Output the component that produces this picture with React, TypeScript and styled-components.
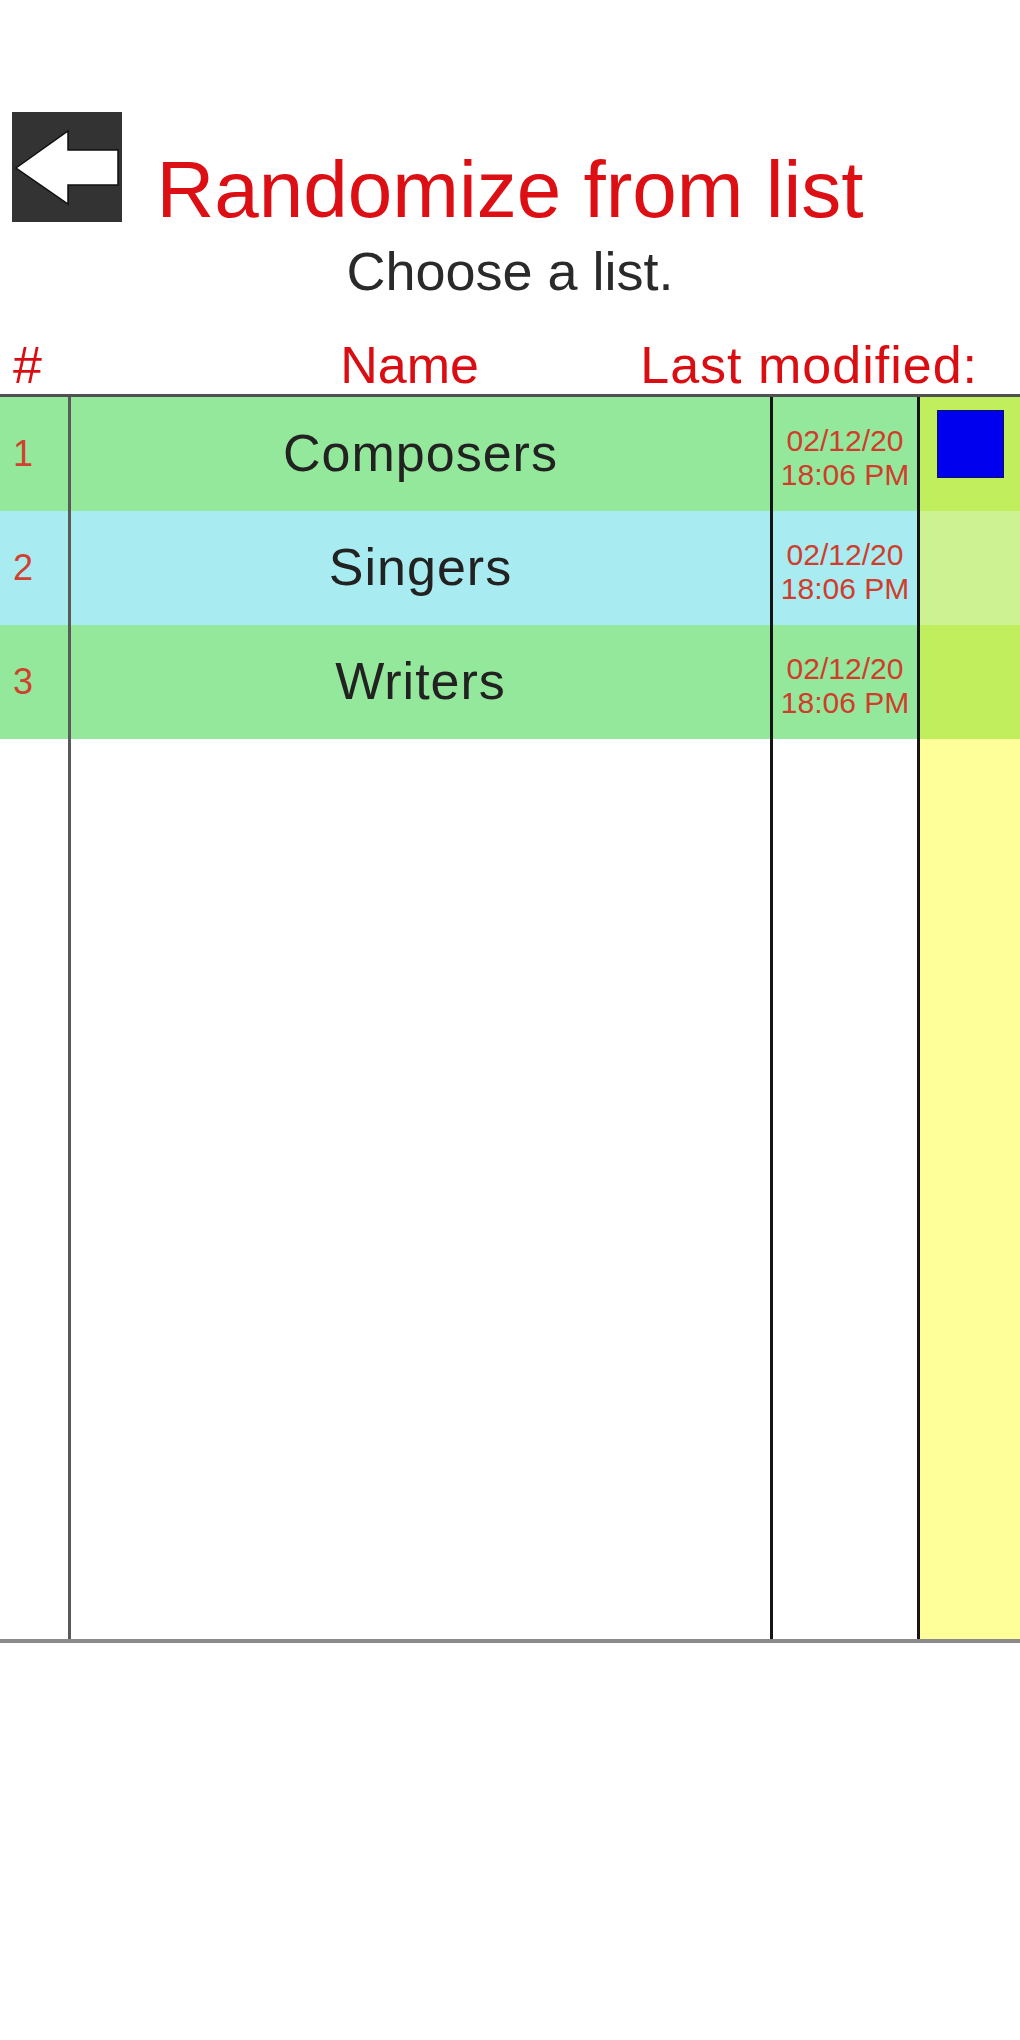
import styled, { createGlobalStyle } from "styled-components";

const GlobalStyle = createGlobalStyle`
  html, body {
    margin: 0;
    padding: 0;
    background: #ffffff;
  }
  body {
    font-family: "Liberation Sans", Arial, sans-serif;
  }
`;

type ListItem = { id: number; name: string; date: string; time: string };

const lists: ListItem[] = [
  { id: 1, name: "Composers", date: "02/12/20", time: "18:06 PM" },
  { id: 2, name: "Singers", date: "02/12/20", time: "18:06 PM" },
  { id: 3, name: "Writers", date: "02/12/20", time: "18:06 PM" },
];

const Page = styled.div`
  width: 1020px;
  height: 2040px;
  padding-top: 112px;
  box-sizing: border-box;
  display: flex;
  flex-direction: column;
`;

const TitleBar = styled.div`
  display: grid;
  grid-template-columns: 1fr auto 1fr;
  align-items: end;
`;

const BackButton = styled.button`
  width: 110px;
  height: 110px;
  margin-left: 12px;
  padding: 0;
  border: none;
  background: #333333;
  display: flex;
  align-items: center;
  justify-content: center;
  cursor: pointer;
`;

const Title = styled.h1`
  margin: 0;
  font-size: 80px;
  line-height: 64px;
  font-weight: 400;
  color: #dc0f14;
  white-space: nowrap;
`;

const Subtitle = styled.p`
  margin: 22px 0 0;
  text-align: center;
  font-size: 54px;
  line-height: 54px;
  color: #2a2a2a;
`;

const HeaderRow = styled.div`
  margin-top: 41px;
  display: grid;
  grid-template-columns: 71px 1fr auto;
  font-size: 52px;
  line-height: 52px;
  color: #d90d12;
  padding-bottom: 3px;
`;

const HashHead = styled.span`
  padding-left: 13px;
`;

const NameHead = styled.span`
  text-align: center;
  padding-left: 108px;
`;

const DateHead = styled.span`
  padding-right: 42px;
  letter-spacing: 1px;
  white-space: nowrap;
`;

const Table = styled.div`
  height: 1249px;
  box-sizing: border-box;
  border-top: 3px solid #505050;
  border-bottom: 4px solid #8a8a8a;
  display: grid;
  grid-template-columns: 71px 702px 147px 1fr;
  grid-template-rows: repeat(3, 114px) 1fr;
`;

const Cell = styled.div<{ $bg: string; $line?: string }>`
  background: ${(p) => p.$bg};
  border-right: ${(p) => (p.$line ? `3px solid ${p.$line}` : "none")};
  display: flex;
  align-items: center;
  min-width: 0;
`;

const NumCell = styled(Cell)`
  padding-left: 13px;
  font-size: 36px;
  color: #d0412f;
`;

const NameCell = styled(Cell)`
  justify-content: center;
  font-size: 52px;
  letter-spacing: 1px;
  color: #222222;
  padding-bottom: 2px;
`;

const DateCell = styled(Cell)`
  flex-direction: column;
  justify-content: center;
  font-size: 30px;
  line-height: 34px;
  color: #cf3e2c;
  padding-top: 8px;
  box-sizing: border-box;
`;

const MarkCell = styled(Cell)`
  align-items: flex-start;
  padding: 13px 0 0 17px;
`;

const Marker = styled.div`
  width: 67px;
  height: 68px;
  box-sizing: border-box;
  background: #0000ee;
  border: 1px solid #101060;
`;

const rowBg = (i: number) => (i % 2 === 0 ? "#94e89b" : "#a8ebf1");
const markBg = (i: number) => (i % 2 === 0 ? "#c1ee5d" : "#cdf291");

function ArrowIcon() {
  return (
    <svg width="110" height="110" viewBox="0 0 110 110">
      <polygon
        points="4,56 56,19 56,38 106,38 106,73 56,73 56,92"
        fill="#ffffff"
        stroke="#111111"
        strokeWidth="1.5"
      />
    </svg>
  );
}

export default function App() {
  return (
    <>
      <GlobalStyle />
      <Page>
        <TitleBar>
          <BackButton aria-label="back">
            <ArrowIcon />
          </BackButton>
          <Title>Randomize from list</Title>
          <span />
        </TitleBar>
        <Subtitle>Choose a list.</Subtitle>
        <HeaderRow>
          <HashHead>#</HashHead>
          <NameHead>Name</NameHead>
          <DateHead>Last modified:</DateHead>
        </HeaderRow>
        <Table>
          {lists.map((item, i) => [
            <NumCell key={`n${item.id}`} $bg={rowBg(i)} $line="#5a5a5a">
              {item.id}
            </NumCell>,
            <NameCell key={`c${item.id}`} $bg={rowBg(i)} $line="#151515">
              {item.name}
            </NameCell>,
            <DateCell key={`d${item.id}`} $bg={rowBg(i)} $line="#151515">
              <span>{item.date}</span>
              <span>{item.time}</span>
            </DateCell>,
            <MarkCell key={`m${item.id}`} $bg={markBg(i)}>
              {i === 0 && <Marker />}
            </MarkCell>,
          ])}
          <Cell $bg="#ffffff" $line="#5a5a5a" />
          <Cell $bg="#ffffff" $line="#151515" />
          <Cell $bg="#ffffff" $line="#151515" />
          <Cell $bg="#ffff9a" />
        </Table>
      </Page>
    </>
  );
}
